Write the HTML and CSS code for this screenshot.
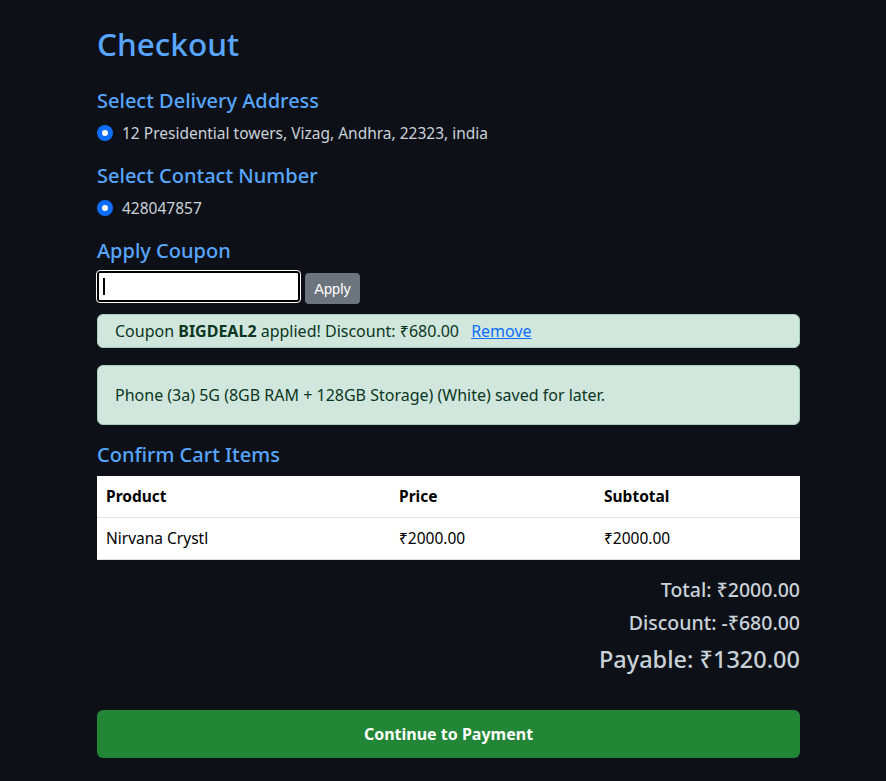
FILE: index.html
```html
<!DOCTYPE html>
<html lang="en">
<head>
<meta charset="utf-8">
<title>Checkout</title>
<link rel="stylesheet" href="styles.css">
</head>
<body>
<main class="container">
  <h1 class="title">Checkout</h1>

  <h5 class="section">Select Delivery Address</h5>
  <label class="check"><span class="radio"></span>12 Presidential towers, Vizag, Andhra, 22323, india</label>

  <h5 class="section">Select Contact Number</h5>
  <label class="check"><span class="radio"></span>428047857</label>

  <h5 class="section">Apply Coupon</h5>
  <div class="coupon-row">
    <input class="coupon-input" type="text" aria-label="Coupon code">
    <button class="btn-apply" type="button">Apply</button>
  </div>

  <div class="alert alert-slim">Coupon <strong>BIGDEAL2</strong> applied! Discount: ₹680.00 <a href="#" class="remove">Remove</a></div>

  <div class="alert">Phone (3a) 5G (8GB RAM + 128GB Storage) (White) saved for later.</div>

  <h5 class="section section-cart">Confirm Cart Items</h5>
  <table class="cart">
    <thead>
      <tr><th class="col-product">Product</th><th class="col-price">Price</th><th>Subtotal</th></tr>
    </thead>
    <tbody>
      <tr><td>Nirvana Crystl</td><td>₹2000.00</td><td>₹2000.00</td></tr>
    </tbody>
  </table>

  <div class="totals">
    <div class="total-line">Total: ₹2000.00</div>
    <div class="total-line">Discount: -₹680.00</div>
    <div class="total-line payable">Payable: ₹1320.00</div>
  </div>

  <button class="btn-pay" type="button">Continue to Payment</button>
</main>
</body>
</html>
```

FILE: styles.css
```css
html, body {
  margin: 0;
  padding: 0;
  background: #0d1117;
}

body {
  font-family: "Noto Sans", "Open Sans", sans-serif;
  font-size: 16px;
  line-height: 24px;
  color: #c9d1d9;
}

.container {
  width: 703px;
  margin: 0 0 0 97px;
  padding: 23px 0 24px;
  display: flex;
  flex-direction: column;
  align-items: stretch;
}

.title {
  margin: 0 0 8px;
  font-size: 31.5px;
  line-height: 42px;
  font-weight: 500;
  color: #58a6ff;
}

.section {
  margin: 16px 0 8px;
  font-size: 20px;
  line-height: 24px;
  font-weight: 500;
  color: #58a6ff;
}

.check {
  display: flex;
  align-items: center;
  gap: 9px;
  margin-bottom: 3px;
  font-size: 15.5px;
  line-height: 24px;
}

.radio {
  width: 16px;
  height: 16px;
  border-radius: 50%;
  background: #0d6efd;
  box-sizing: border-box;
  display: flex;
  align-items: center;
  justify-content: center;
  flex: none;
}

.radio::after {
  content: "";
  width: 6px;
  height: 6px;
  border-radius: 50%;
  background: #fff;
}

.coupon-row {
  display: flex;
  align-items: flex-start;
  gap: 5px;
}

.coupon-input {
  width: 203px;
  height: 31px;
  box-sizing: border-box;
  margin: 0;
  border: 2px solid #000;
  outline: 1px solid #fff;
  outline-offset: 0;
  border-radius: 3px;
  background: #fff linear-gradient(#000, #000) no-repeat 4px 5px / 2px 17px;
}

.btn-apply {
  margin-top: 2px;
  width: 55px;
  height: 31px;
  border: 0;
  border-radius: 4px;
  background: #6c757d;
  color: #fff;
  font-family: "Liberation Sans", Arial, sans-serif;
  font-size: 14.5px;
  padding: 0;
}

.alert {
  margin-bottom: 17px;
  padding: 17px 17px;
  border: 1px solid #a3cfbb;
  border-radius: 6px;
  background: #d1e7dd;
  color: #0a3622;
  font-size: 16px;
}

.alert-slim {
  margin-top: 10px;
  margin-bottom: 17px;
  padding: 4px 17px;
}

.alert strong {
  font-weight: 700;
}

.remove {
  margin-left: 8px;
  color: #0d6efd;
  text-decoration: underline;
}

.section-cart {
  margin-top: 1px;
  margin-bottom: 9px;
}

.cart {
  width: 100%;
  border-collapse: collapse;
  background: #fff;
  color: #000;
  font-size: 15.5px;
  line-height: 23px;
  margin-bottom: 18px;
}

.cart th,
.cart td {
  text-align: left;
  padding: 9px 9px;
  border-bottom: 1px solid #dee2e6;
}

.cart th {
  font-weight: 700;
}

.cart .col-product {
  width: 275px;
}

.cart .col-price {
  width: 187px;
}

.totals {
  display: flex;
  flex-direction: column;
  align-items: flex-end;
  color: #c9d1d9;
}

.total-line {
  font-size: 19.5px;
  line-height: 24px;
  font-weight: 500;
  margin-bottom: 9px;
}

.total-line.payable {
  font-size: 23.5px;
  line-height: 28px;
  margin-top: 1px;
  margin-bottom: 0;
}

.btn-pay {
  margin-top: 37px;
  height: 48px;
  border: 0;
  border-radius: 6px;
  background: #238636;
  color: #fff;
  font-family: "Noto Sans", "Open Sans", sans-serif;
  font-size: 16px;
  font-weight: 700;
}
```
